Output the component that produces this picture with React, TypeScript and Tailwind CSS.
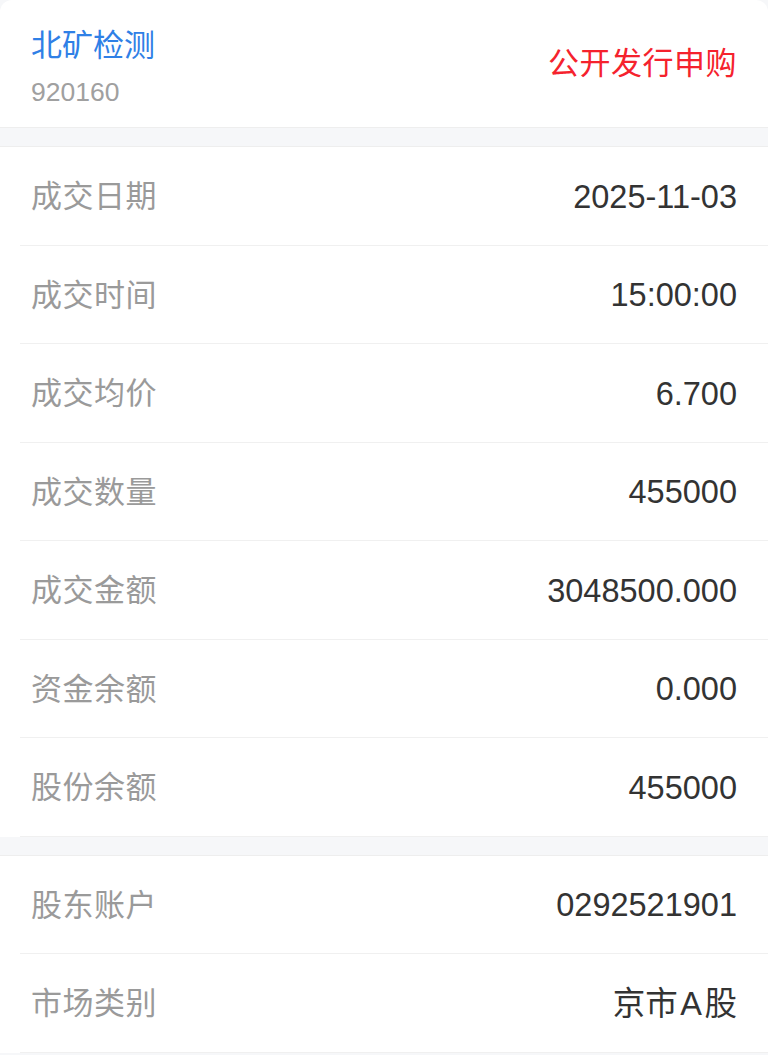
import React from "react";

const cjk = "font-['Liberation_Sans','Noto_Sans_CJK_SC',sans-serif]";

interface RowProps {
  label: string;
  value: React.ReactNode;
}

const Row: React.FC<RowProps> = ({ label, value }) => (
  <div className="ml-[20px] h-[98.5px] border-b border-[#f0f0f0] flex items-center justify-between pt-[3px] pl-[11px] pr-[31px]">
    <span className="text-[31px] text-[#9a9a9a] tracking-[0.5px]">{label}</span>
    <span className="text-[32.5px] text-[#333333]">{value}</span>
  </div>
);

const trades = [
  { label: "成交日期", value: "2025-11-03" },
  { label: "成交时间", value: "15:00:00" },
  { label: "成交均价", value: "6.700" },
  { label: "成交数量", value: "455000" },
  { label: "成交金额", value: "3048500.000" },
  { label: "资金余额", value: "0.000" },
  { label: "股份余额", value: "455000" },
];

const account = [
  { label: "股东账户", value: "0292521901" },
  {
    label: "市场类别",
    value: (
      <>
        京市<span className="mx-[2.5px]">A</span>股
      </>
    ),
  },
];

export default function App() {
  return (
    <div className={`min-h-[1055px] bg-[#f6f7f9] ${cjk}`}>
      <div className="bg-white rounded-t-[12px] h-[128px] flex items-center justify-between px-[31px] border-b border-[#eeeeee]">
        <div className="flex flex-col pt-[6px]">
          <span className="text-[31px] text-[#2f80e6] leading-[40px]">北矿检测</span>
          <span className="text-[26.5px] text-[#a0a0a0] leading-[30px] mt-[11px]">920160</span>
        </div>
        <span className="text-[31px] text-[#f5222d] tracking-[0.5px] pt-[2px]">公开发行申购</span>
      </div>
      <div className="h-[18px]" />
      <div className="bg-white border-t border-[#eeeeee]">
        {trades.map((r) => (
          <Row key={r.label} label={r.label} value={r.value} />
        ))}
      </div>
      <div className="h-[18px]" />
      <div className="bg-white border-t border-[#eeeeee]">
        {account.map((r) => (
          <Row key={r.label} label={r.label} value={r.value} />
        ))}
      </div>
    </div>
  );
}
